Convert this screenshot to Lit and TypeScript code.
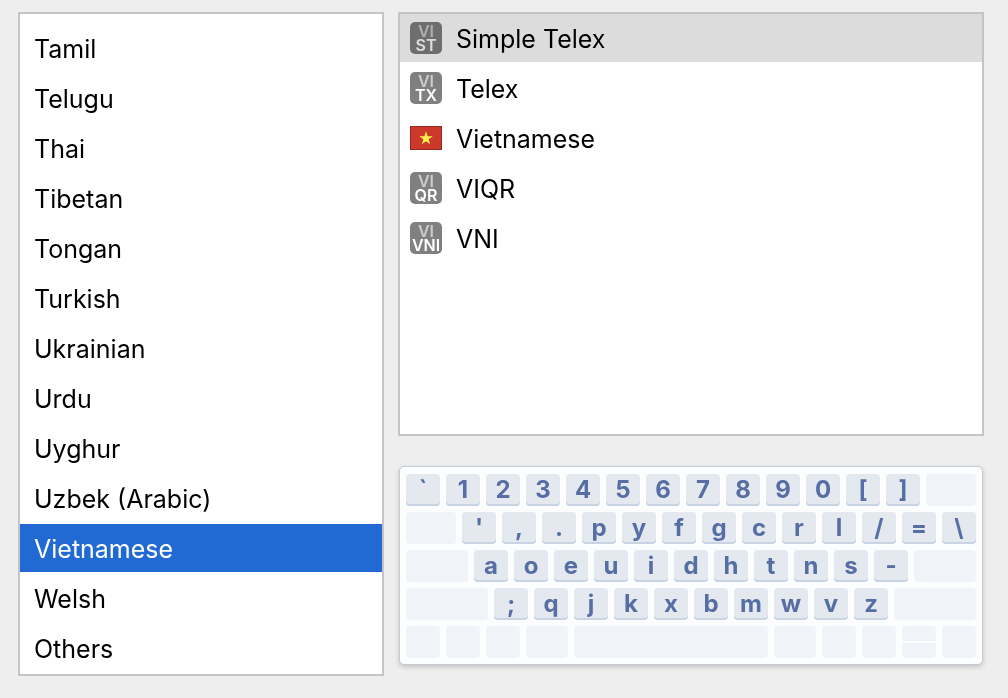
import { LitElement, html, css, svg, nothing } from "lit";
import { customElement, state, property } from "lit/decorators.js";
import { classMap } from "lit/directives/class-map.js";
import { styleMap } from "lit/directives/style-map.js";

interface Source {
  name: string;
  badge?: string;
}

interface Key {
  label?: string;
  width: number;
  split?: boolean;
}

const LANGUAGES = [
  "Tamil", "Telugu", "Thai", "Tibetan", "Tongan", "Turkish", "Ukrainian",
  "Urdu", "Uyghur", "Uzbek (Arabic)", "Vietnamese", "Welsh", "Others",
];

const SOURCES: Source[] = [
  { name: "Simple Telex", badge: "ST" },
  { name: "Telex", badge: "TX" },
  { name: "Vietnamese" },
  { name: "VIQR", badge: "QR" },
  { name: "VNI", badge: "VNI" },
];

const keys = (chars: string): Key[] => [...chars].map((label) => ({ label, width: 34 }));
const blank = (width: number): Key => ({ width });

const ROWS: Key[][] = [
  [...keys("`1234567890[]"), blank(50)],
  [blank(50), ...keys("',.pyfgcrl/=\\")],
  [blank(62), ...keys("aoeuidhtns-"), blank(62)],
  [blank(82), ...keys(";qjkxbmwvz"), blank(82)],
  [
    blank(34), blank(34), blank(34), blank(42), blank(194), blank(42),
    blank(34), blank(34), { width: 34, split: true }, blank(34),
  ],
];

@customElement("keyboard-preview")
export class KeyboardPreview extends LitElement {
  static styles = css`
    :host {
      display: flex;
      flex-direction: column;
      gap: 6px;
      box-sizing: border-box;
      padding: 7px 6px 6px;
      background: #fbfdff;
      border: 1px solid #c3cad2;
      border-radius: 5px;
      box-shadow: 0 2px 5px rgba(0, 0, 0, 0.18);
    }
    .row {
      display: flex;
      gap: 6px;
      height: 32px;
    }
    .key {
      box-sizing: border-box;
      flex-basis: 0;
      min-width: 0;
      margin: 0;
      padding: 0;
      border: 0;
      border-radius: 4px;
      background: #f0f3f8;
    }
    .letter {
      background: #e4e9f0;
      box-shadow: inset 0 -2px 0 #c8d3e4;
      color: #566ea4;
      font: bold 24px/30px Inter, "Liberation Sans", sans-serif;
      font-optical-sizing: none;
      text-align: center;
    }
    .split {
      display: flex;
      flex-direction: column;
      gap: 2px;
      overflow: hidden;
      background: none;
    }
    .half {
      flex: 1;
      background: #f0f3f8;
    }
  `;

  render() {
    return ROWS.map(
      (row) => html`<div class="row">
        ${row.map((key) => {
          const size = styleMap({ flexGrow: String(key.width) });
          return key.label
            ? html`<button class="key letter" type="button" style=${size}>${key.label}</button>`
            : html`<span class=${classMap({ key: true, split: !!key.split })} style=${size}
                >${key.split
                  ? html`<span class="half"></span><span class="half"></span>`
                  : nothing}</span>`;
        })}
      </div>`,
    );
  }
}

@customElement("source-icon")
export class SourceIcon extends LitElement {
  @property() badge?: string;

  static styles = css`
    :host {
      display: block;
      flex: none;
      width: 32px;
      mix-blend-mode: multiply;
    }
    .badge {
      display: flex;
      flex-direction: column;
      align-items: center;
      box-sizing: border-box;
      height: 32px;
      padding-top: 2px;
      border-radius: 5px;
      background: #808080;
      color: #fff;
      font: 600 16px/14px Inter, "Liberation Sans", sans-serif;
    }
    .script {
      color: #cccccc;
    }
    .flag {
      display: block;
      width: 32px;
      height: 24px;
    }
  `;

  render() {
    if (this.badge) {
      return html`<div class="badge"><span class="script">VI</span><span>${this.badge}</span></div>`;
    }
    return html`<svg class="flag" viewBox="0 0 32 24" aria-hidden="true">
      ${svg`<rect x="0.5" y="0.5" width="31" height="23" fill="#cc392b" stroke="#932a20" />
      <path d="M16 5.2l1.6 5h5.2l-4.2 3.1 1.6 5-4.2-3.1-4.2 3.1 1.6-5-4.2-3.1h5.2z" fill="#fdf04c" />`}
    </svg>`;
  }
}

@customElement("app-root")
export class AppRoot extends LitElement {
  @state() private language = "Vietnamese";
  @state() private source = "Simple Telex";

  static styles = css`
    :host {
      display: grid;
      grid-template-columns: 366fr 586fr;
      gap: 14px;
      box-sizing: border-box;
      min-height: 100vh;
      padding: 12px 24px 22px 18px;
      background: #eeeeee;
      color: #000;
      font-family: Inter, "Liberation Sans", sans-serif;
    }
    .panel {
      display: flex;
      flex-direction: column;
      gap: 2px;
      box-sizing: border-box;
      background: #fff;
      border: 2px solid #c4c4c4;
    }
    .languages {
      padding: 10px 0 2px;
    }
    .side {
      display: flex;
      flex-direction: column;
      gap: 30px;
    }
    .sources {
      flex: 1;
    }
    .preview {
      margin: 0 1px 11px;
    }
    .item {
      display: flex;
      align-items: center;
      gap: 14px;
      height: 48px;
      margin: 0;
      padding: 0 14px;
      border: 0;
      background: none;
      color: inherit;
      font: 400 25px/32px Inter, "Liberation Sans", sans-serif;
      text-align: left;
    }
    .name {
      padding-top: 2px;
    }
    .source {
      padding: 0 10px;
    }
    .active {
      background: #226ad3;
      color: #fff;
    }
    .muted {
      background: #dcdcdc;
    }
  `;

  render() {
    return html`
      <div class="panel languages" role="listbox" aria-label="Languages">
        ${LANGUAGES.map(
          (name) => html`<button
            type="button"
            role="option"
            aria-selected=${name === this.language}
            class=${classMap({ item: true, active: name === this.language })}
            @click=${() => (this.language = name)}
          ><span class="name">${name}</span></button>`,
        )}
      </div>
      <div class="side">
        <div class="panel sources" role="listbox" aria-label="Input sources">
          ${SOURCES.map(
            ({ name, badge }) => html`<button
              type="button"
              role="option"
              aria-selected=${name === this.source}
              class=${classMap({ item: true, source: true, muted: name === this.source })}
              @click=${() => (this.source = name)}
            ><source-icon .badge=${badge}></source-icon><span class="name">${name}</span></button>`,
          )}
        </div>
        <keyboard-preview class="preview"></keyboard-preview>
      </div>
    `;
  }
}
